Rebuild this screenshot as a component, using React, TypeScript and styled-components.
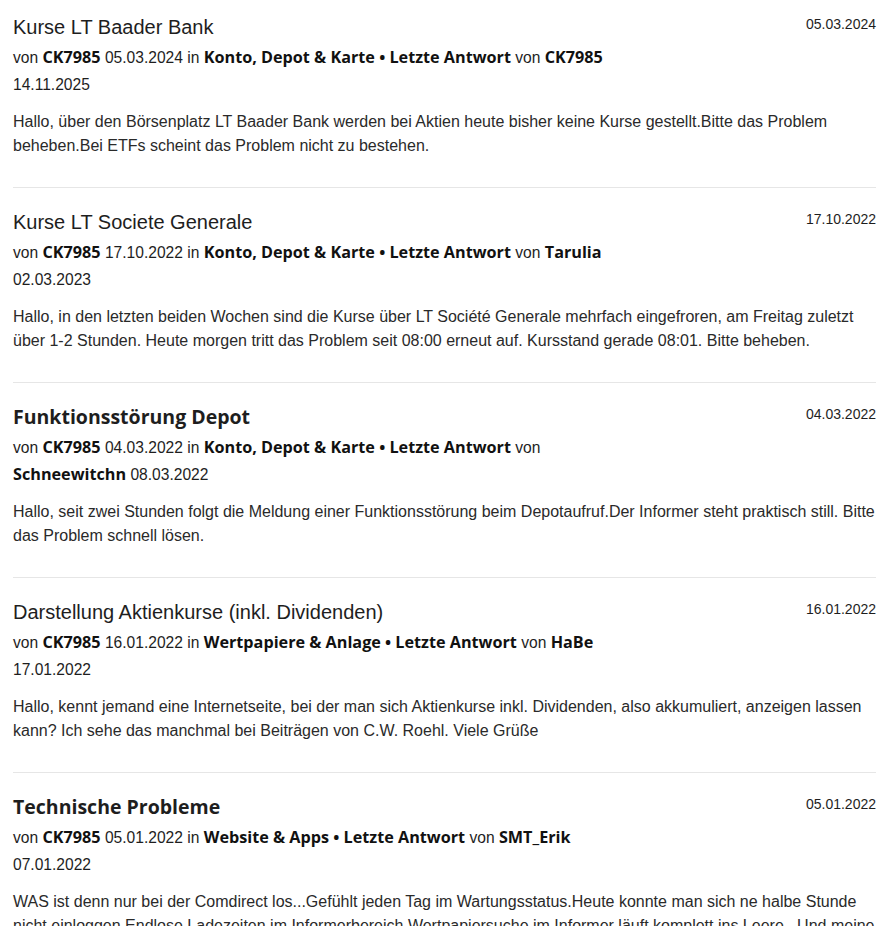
import React from "react";
import styled, { createGlobalStyle } from "styled-components";

const GlobalStyle = createGlobalStyle`
  html, body {
    margin: 0;
    padding: 0;
    background: #ffffff;
  }
  body {
    font-family: "Liberation Sans", Arial, sans-serif;
    color: #222222;
  }
`;

const Page = styled.div`
  padding: 13px 15px 0 13px;
`;

const List = styled.ul`
  list-style: none;
  margin: 0;
  padding: 0;
`;

const Item = styled.li`
  padding: 20px 0 29px;
  border-bottom: 1px solid #e6e6e6;
  &:first-child {
    padding-top: 0;
  }
`;

const Head = styled.div`
  display: flex;
  justify-content: space-between;
  align-items: flex-start;
  gap: 16px;
`;

const Title = styled.h3<{ $strong?: boolean }>`
  margin: 0;
  font-family: ${(p) =>
    p.$strong ? `"Open Sans", "Liberation Sans", sans-serif` : `"Liberation Sans", Arial, sans-serif`};
  font-weight: ${(p) => (p.$strong ? 700 : 400)};
  font-size: ${(p) => (p.$strong ? "19.5px" : "20px")};
  line-height: 28px;
  color: #1e1e1e;
`;

const DateStamp = styled.span`
  font-size: 14px;
  line-height: 20px;
  margin-top: 1px;
  color: #1e1e1e;
  white-space: nowrap;
`;

const Meta = styled.p`
  margin: 3px 0 0;
  font-size: 15.6px;
  line-height: 27px;
  color: #1e1e1e;
`;

const B = styled.strong`
  font-family: "Open Sans", "Liberation Sans", sans-serif;
  font-weight: 700;
  font-size: 16.2px;
  line-height: 1;
  color: #111111;
`;

const Body = styled.p`
  margin: 12px 0 0;
  font-size: 16px;
  line-height: 24px;
  color: #2a2a2a;
`;

type Post = {
  title: string;
  strong?: boolean;
  date: string;
  category: string;
  lastBy: string;
  lastDate: string;
  breakBeforeUser?: boolean;
  text: string;
};

const posts: Post[] = [
  {
    title: "Kurse LT Baader Bank",
    date: "05.03.2024",
    category: "Konto, Depot & Karte",
    lastBy: "CK7985",
    lastDate: "14.11.2025",
    text:
      "Hallo, über den Börsenplatz LT Baader Bank werden bei Aktien heute bisher keine Kurse gestellt.Bitte das Problem beheben.Bei ETFs scheint das Problem nicht zu bestehen.",
  },
  {
    title: "Kurse LT Societe Generale",
    date: "17.10.2022",
    category: "Konto, Depot & Karte",
    lastBy: "Tarulia",
    lastDate: "02.03.2023",
    text:
      "Hallo, in den letzten beiden Wochen sind die Kurse über LT Société Generale mehrfach eingefroren, am Freitag zuletzt über 1-2 Stunden. Heute morgen tritt das Problem seit 08:00 erneut auf. Kursstand gerade 08:01. Bitte beheben.",
  },
  {
    title: "Funktionsstörung Depot",
    strong: true,
    date: "04.03.2022",
    category: "Konto, Depot & Karte",
    lastBy: "Schneewitchn",
    lastDate: "08.03.2022",
    breakBeforeUser: true,
    text:
      "Hallo, seit zwei Stunden folgt die Meldung einer Funktionsstörung beim Depotaufruf.Der Informer steht praktisch still. Bitte das Problem schnell lösen.",
  },
  {
    title: "Darstellung Aktienkurse (inkl. Dividenden)",
    date: "16.01.2022",
    category: "Wertpapiere & Anlage",
    lastBy: "HaBe",
    lastDate: "17.01.2022",
    text:
      "Hallo, kennt jemand eine Internetseite, bei der man sich Aktienkurse inkl. Dividenden, also akkumuliert, anzeigen lassen kann? Ich sehe das manchmal bei Beiträgen von C.W. Roehl. Viele Grüße",
  },
  {
    title: "Technische Probleme",
    strong: true,
    date: "05.01.2022",
    category: "Website & Apps",
    lastBy: "SMT_Erik",
    lastDate: "07.01.2022",
    text:
      "WAS ist denn nur bei der Comdirect los...Gefühlt jeden Tag im Wartungsstatus.Heute konnte man sich ne halbe Stunde nicht einloggen.Endlose Ladezeiten im Informerbereich.Wertpapiersuche im Informer läuft komplett ins Leere...Und meine",
  },
];

export default function App() {
  return (
    <>
      <GlobalStyle />
      <Page>
        <List>
          {posts.map((p) => (
            <Item key={p.title}>
              <Head>
                <Title $strong={p.strong}>{p.title}</Title>
                <DateStamp>{p.date}</DateStamp>
              </Head>
              <Meta>
                von <B>CK7985</B> {p.date} in <B>{p.category} • Letzte Antwort</B> von
                {p.breakBeforeUser ? <br /> : " "}
                <B>{p.lastBy}</B>
                {p.breakBeforeUser ? " " : <br />}
                {p.lastDate}
              </Meta>
              <Body>{p.text}</Body>
            </Item>
          ))}
        </List>
      </Page>
    </>
  );
}
